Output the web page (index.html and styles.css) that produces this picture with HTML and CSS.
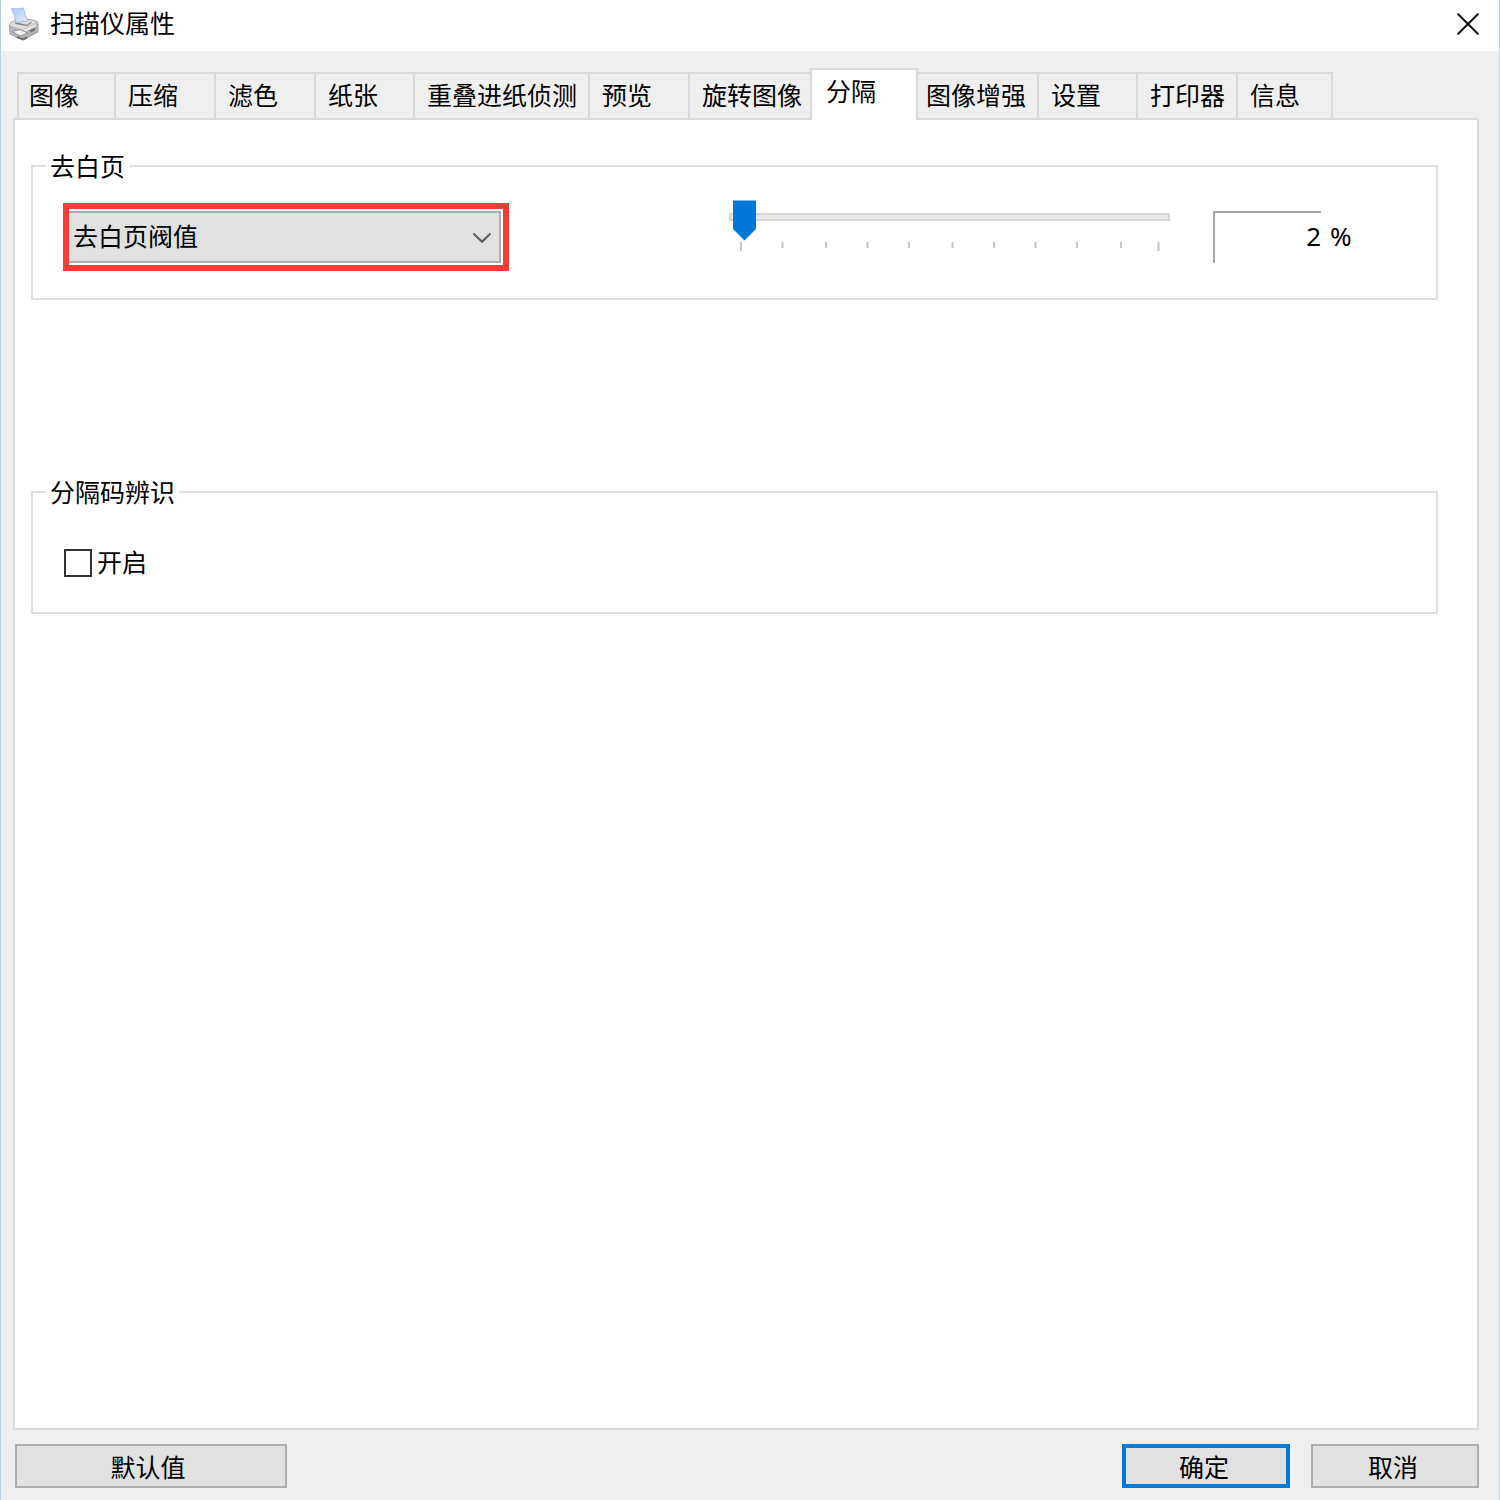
FILE: index.html
```html
<!DOCTYPE html>
<html lang="zh-CN">
<head>
<meta charset="utf-8">
<title>扫描仪属性</title>
<link rel="stylesheet" href="styles.css">
</head>
<body>
<div class="window">
  <header class="titlebar">
    <svg class="app-icon" width="32" height="34" viewBox="0 0 32 34">
      <defs>
        <linearGradient id="paper" x1="0" y1="0" x2="1" y2="1"><stop offset="0" stop-color="#a9c6f5"/><stop offset="1" stop-color="#e4efff"/></linearGradient>
        <linearGradient id="shell" x1="0" y1="0" x2="1" y2="1"><stop offset="0" stop-color="#f1f1ef"/><stop offset="1" stop-color="#a9aaa8"/></linearGradient>
      </defs>
      <path d="M1.500 18Q1.500 16 4 15L12 11L27 13.500Q30 14 30 17V25L16 32.500Q14.500 33 13 32L2 27Z" fill="url(#shell)" stroke="#9a9c9b"/>
      <path d="M2 18.500L15 23L29.500 16V24.500L15 32L2 26.500Z" fill="#b3b4b2"/>
      <path d="M2 18L12 12L28.500 14.500L15 22.500Z" fill="#dededb"/>
      <path d="M7 16L19 18.500L23.500 15" fill="none" stroke="#85888a" stroke-width="1.500"/>
      <path d="M3.500 1.500Q10 2.500 15.500 1Q16 8 20 14L8 15.500Q7 8 3.500 1.500Z" fill="url(#paper)" stroke="#9db9ea"/>
      <path d="M15 24.500L28 18" stroke="#ecedeb" stroke-width="2"/>
      <path d="M4 24.500L12 22.500L20 26L12 29Z" fill="#f3f3f1" stroke="#8f9292"/>
      <path d="M9 30L15 32.500L19 30.500M22 24.500L27 22" fill="none" stroke="#6c7170" stroke-width="2"/>
    </svg>
    <h1 class="title">扫描仪属性</h1>
    <svg class="close" width="22" height="22" viewBox="0 0 22 22"><path d="M1.200 1.200L20.800 20.800M20.800 1.200L1.200 20.800" stroke="#111" stroke-width="2" stroke-linecap="round"/></svg>
  </header>

  <nav class="tabs">
    <span class="tab">图像</span>
    <span class="tab">压缩</span>
    <span class="tab">滤色</span>
    <span class="tab">纸张</span>
    <span class="tab">重叠进纸侦测</span>
    <span class="tab">预览</span>
    <span class="tab">旋转图像</span>
    <span class="tab selected">分隔</span>
    <span class="tab after">图像增强</span>
    <span class="tab">设置</span>
    <span class="tab">打印器</span>
    <span class="tab last">信息</span>
  </nav>

  <main class="panel">
    <section class="group blank">
      <h2 class="legend">去白页</h2>
      <div class="row">
        <div class="highlight">
          <div class="combo">
            <span>去白页阀值</span>
            <svg width="20" height="12" viewBox="0 0 20 12"><path d="M1.500 1.500L10 9.800L18.500 1.500" fill="none" stroke="#5c5c5c" stroke-width="2"/></svg>
          </div>
        </div>
        <svg class="slider" width="442" height="54" viewBox="0 0 442 54">
          <rect x="1" y="14" width="439" height="6" fill="#e7eaea" stroke="#d6d8d7" stroke-width="2"/>
          <path d="M4 0.500H27V29L15.500 40.500L4 29Z" fill="#0078d7"/>
          <path d="M12 42v9M429.500 42v9" stroke="#c4c4c4" stroke-width="2"/>
          <path d="M53.500 42v6M97 42v6M138.500 42v6M180 42v6M223.500 42v6M265 42v6M306.500 42v6M348 42v6M392 42v6" stroke="#c4c4c4" stroke-width="2"/>
        </svg>
        <div class="value"><span class="number">2</span></div>
        <span class="unit">%</span>
      </div>
    </section>

    <section class="group barcode">
      <h2 class="legend">分隔码辨识</h2>
      <label class="check"><span class="box"></span><span class="check-text">开启</span></label>
    </section>
  </main>

  <footer class="actions">
    <button class="btn defaults">默认值</button>
    <button class="btn primary">确定</button>
    <button class="btn">取消</button>
  </footer>
</div>
</body>
</html>
```

FILE: styles.css
```css
* { box-sizing: border-box; }

body {
  margin: 0;
  background: #efefef;
  color: #000;
  font: 25px/36px "Noto Sans CJK SC", sans-serif;
}

.window {
  width: 1500px;
  height: 1500px;
  display: flex;
  flex-direction: column;
  border: solid #b7d2ea;
  border-width: 0 1px;
  background: #efefef;
  overflow: hidden;
}

.titlebar {
  height: 51px;
  flex: none;
  display: flex;
  align-items: flex-start;
  padding: 0 20px 0 7px;
  background: #fff;
}
.app-icon { margin-top: 7px; }
.title { margin: 4px auto 0 10px; font: inherit; }
.close { margin-top: 13px; }

.tabs {
  height: 50px;
  flex: none;
  margin: 17px 0 0 16px;
  display: grid;
  grid-template-columns: 97px 100px 100px 99px 175px 100px 122px 108px 119px 99px 100px 97px;
  align-items: end;
}
.tab {
  height: 46px;
  padding: 2px 0 0 10px;
  border: solid #dadada;
  border-width: 2px 0 0 2px;
  white-space: nowrap;
}
.tab:nth-child(n+2) { padding-left: 12px; }
.tab.selected {
  position: relative;
  height: 52px;
  margin-bottom: -2px;
  padding: 2px 0 0 14px;
  border-right-width: 2px;
  background: #fff;
}
.tab.after { border-left-width: 0; padding-left: 8px; }
.tab.last { border-right-width: 2px; }

.panel {
  width: 1466px;
  height: 1312px;
  flex: none;
  margin-left: 12px;
  padding: 45px 0 0 16px;
  border: 2px solid #dadada;
  background: #fff;
}

.group { width: 1407px; border: 2px solid #dedede; }
.blank { height: 135px; }
.barcode { height: 123px; margin-top: 191px; }
.legend {
  width: max-content;
  height: 36px;
  margin: -20px 0 0 13px;
  padding: 0 4px;
  background: #fff;
  font: inherit;
}

.row { display: flex; align-items: flex-start; padding: 20px 0 0 30px; }
.highlight {
  width: 446px;
  height: 68px;
  border: 6px solid #ff3838;
  padding: 2px 2px 2px 0;
}
.combo {
  height: 52px;
  display: flex;
  align-items: center;
  justify-content: space-between;
  padding: 0 7px 4px 4px;
  border: 2px solid #adadad;
  border-left: 0;
  background: #e1e1e1;
}
.combo svg { margin-top: 5px; }
.slider { margin: -3px 0 0 220px; }
.value {
  width: 108px;
  height: 52px;
  margin: 8px 0 0 42px;
  background:
    linear-gradient(#a6a6a6, #a6a6a6) 0 0 / 108px 2px no-repeat,
    linear-gradient(#a6a6a6, #a6a6a6) 0 0 / 2px 52px no-repeat;
  text-align: right;
}
.number, .unit { font-family: "Noto Sans", sans-serif; font-size: 26px; }
.number { display: block; margin-top: 7px; }
.unit { margin: 15px 0 0 9px; }

.check { display: flex; align-items: flex-start; padding: 34px 0 0 31px; }
.box { width: 28px; height: 28px; margin-top: 6px; border: 2px solid #333; background: #fff; }
.check-text { margin-left: 5px; }

.actions { display: flex; padding: 14px 20px 0 14px; gap: 21px; }
.btn {
  width: 168px;
  height: 44px;
  padding: 0;
  border: 2px solid #adadad;
  border-radius: 0;
  background: #e1e1e1;
  color: #000;
  font: inherit;
}
.defaults { width: 272px; margin-right: auto; padding-right: 6px; }
.primary { border: 4px solid #0078d7; padding-right: 4px; }
.btn:last-child { padding-right: 4px; }
```
